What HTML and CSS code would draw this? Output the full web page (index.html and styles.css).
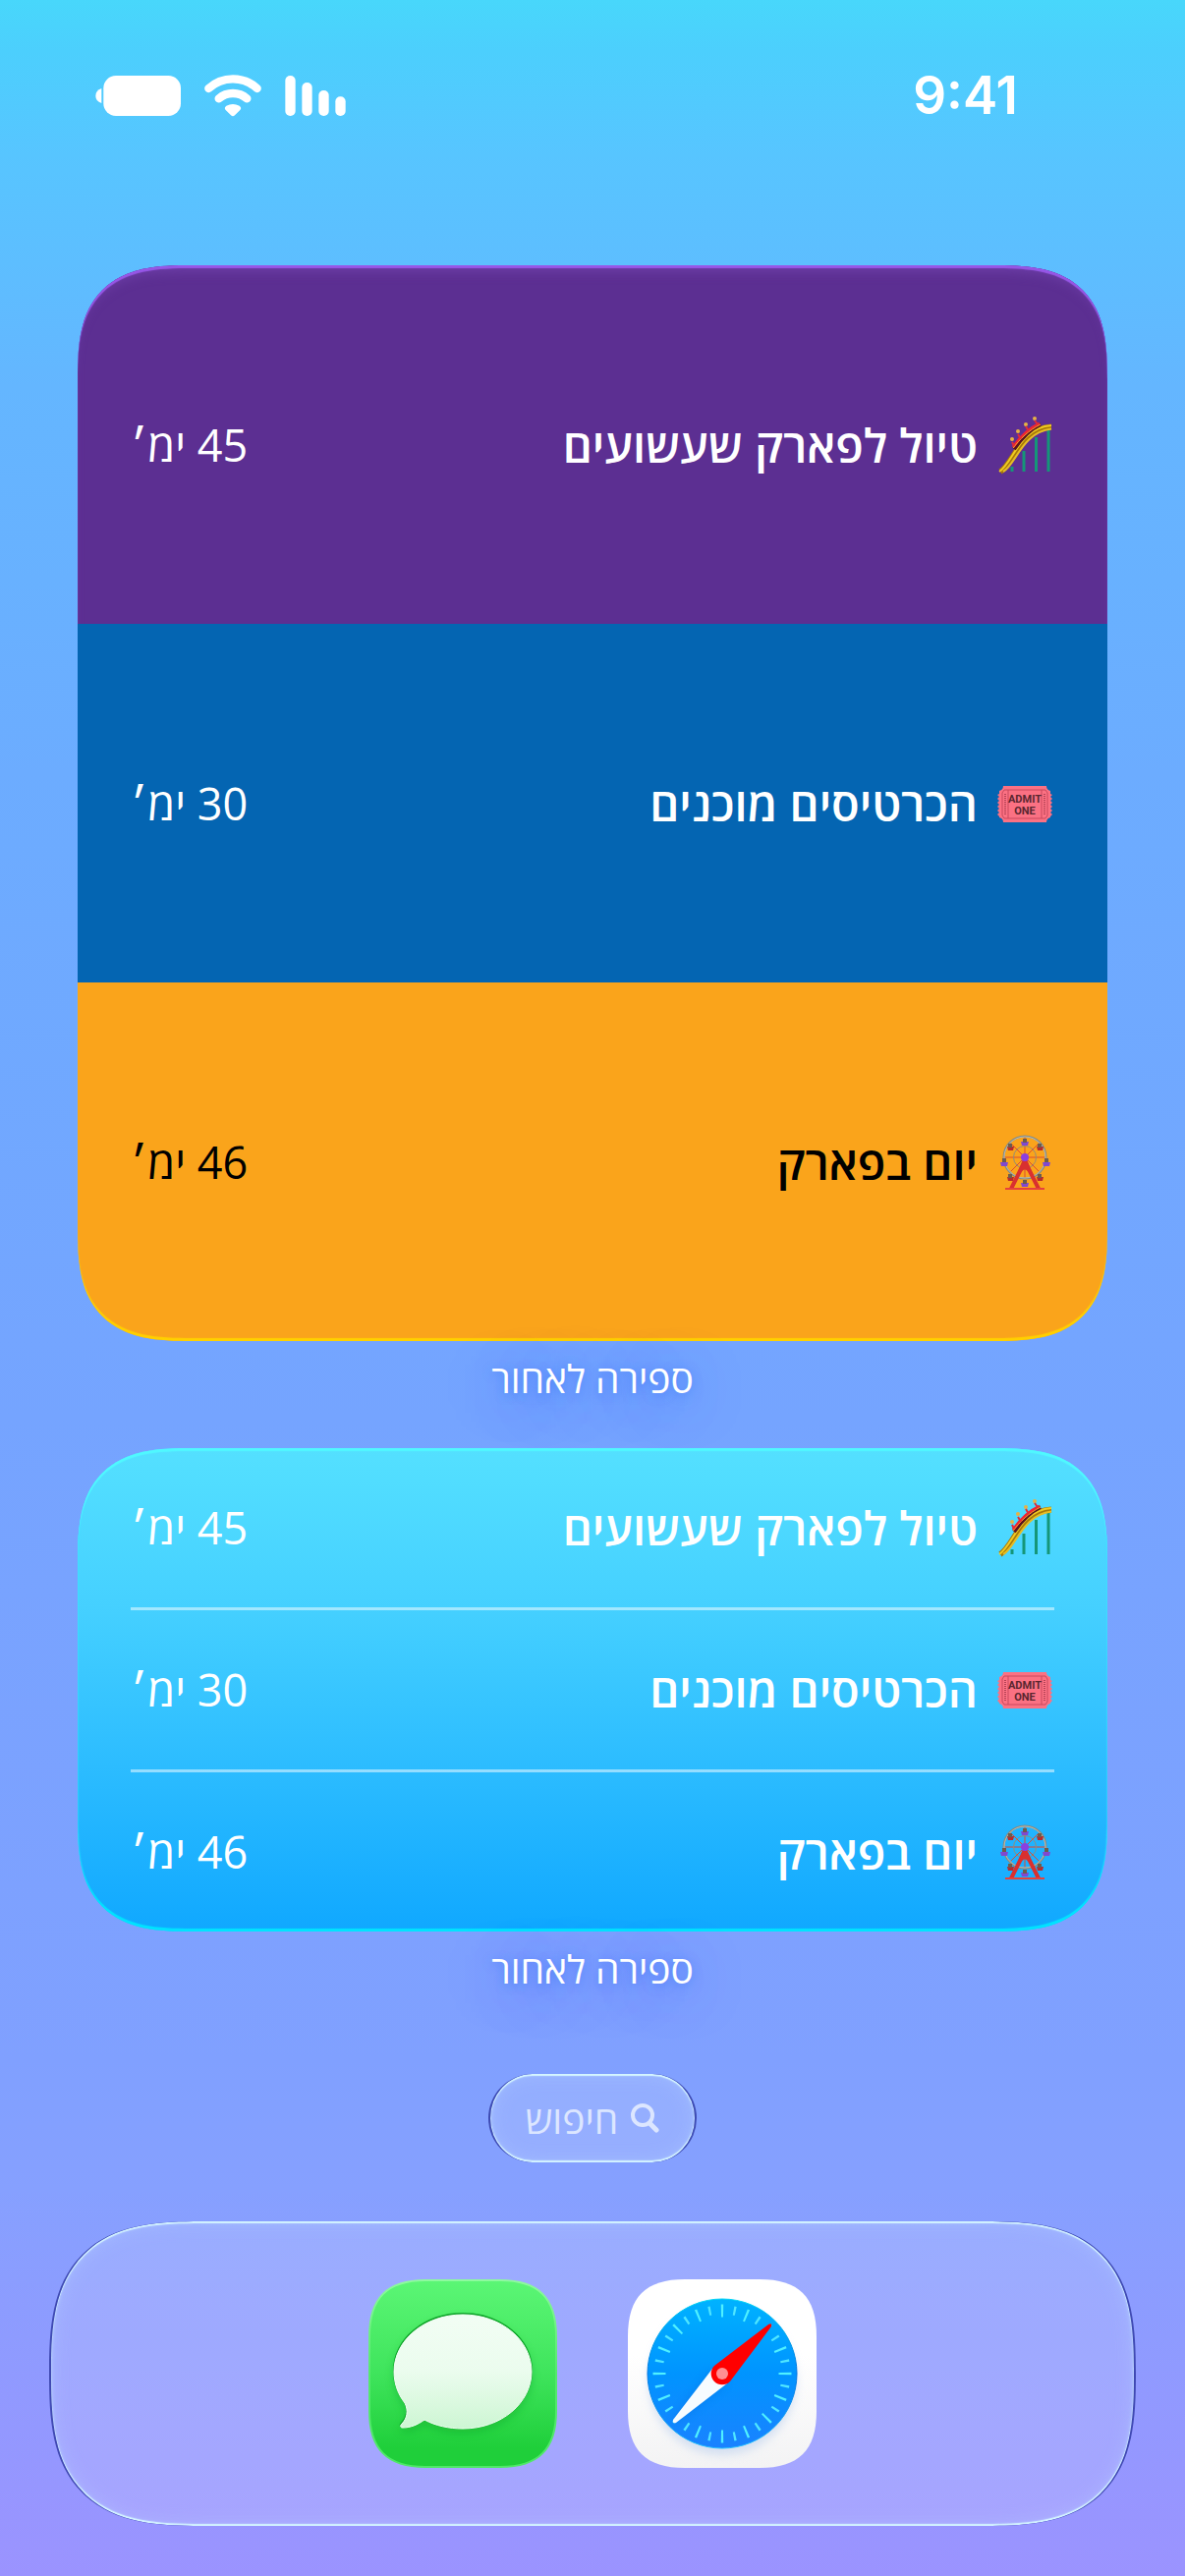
FILE: index.html
```html
<!DOCTYPE html>
<html lang="he" dir="rtl">
<head>
    <meta charset="UTF-8">
    <meta name="viewport" content="width=device-width, initial-scale=1.0">
    <title>ספירה לאחור</title>
    <link rel="stylesheet" href="styles.css">
</head>
<body>
    <!-- shared drawings -->
    <svg class="defs" width="0" height="0" aria-hidden="true">
        <defs>
            <symbol id="coaster" viewBox="0 0 60 60">
                <g stroke="#159678" stroke-width="3">
                    <path d="M17 52V57M29 36V57M41.500 22V57M54 15V57"/>
                </g>
                <path d="M5 57C19 49 25 13 57 11.500" fill="none" stroke="#a87908" stroke-width="6"/>
                <path d="M4 57C18 48 25 12 57 10" fill="none" stroke="#f0cb22" stroke-width="2"/>
                <path d="M8 57C21 50 27 17 57 13.500" fill="none" stroke="#e6bd25" stroke-width="2"/>
                <path d="M19 34C26 24 35 14 46 9" fill="none" stroke="#5a1420" stroke-width="4"/>
                <path d="M18 32C25 22 34 13 45 8" fill="none" stroke="#ef2433" stroke-width="3"/>
                <path d="M18 33C25 24 34 15 46 9" fill="none" stroke="#f5a327" stroke-width="1"/>
                <g fill="#e6b245">
                    <circle cx="17" cy="24" r="2"/><circle cx="23" cy="16" r="2"/><circle cx="31" cy="9" r="2"/><circle cx="40" cy="3" r="2"/>
                </g>
                <g stroke="#e02b38" stroke-width="2"><path d="M17 27l2 4M23 19l3 5M31 11l3 5M40 5l3 4"/></g>
            </symbol>
            <symbol id="ticket" viewBox="0 0 60 60">
                <path d="M8 12H52Q52 16 56 17V20L58 21 56 23 58 25 56 27 58 29 56 31 58 33 56 35 58 37 56 39 58 41 56 43V44Q52 45 52 49H8Q8 45 4 44V43L2 41 4 39 2 37 4 35 2 33 4 31 2 29 4 27 2 25 4 23 2 21 4 20V17Q8 16 8 12Z" fill="#fb7183"/>
                <path d="M9 16H51L53 19V42L51 45H9L7 42V19ZM13 16V45M47 16V45" fill="none" stroke="#c9495d" stroke-width="1"/>
                <path d="M10 20V42M50 20V42" stroke="#b54255" stroke-width="2" stroke-dasharray="1 1"/>
                <text x="30" y="29" class="ticket-text">ADMIT</text>
                <text x="30" y="41" class="ticket-text">ONE</text>
            </symbol>
            <symbol id="wheel" viewBox="0 0 60 60">
                <g stroke="#dc4a33" stroke-width="1">
                    <path d="M30 4V46M9 25H51M15 10L45 40M45 10L15 40"/>
                </g>
                <circle cx="30" cy="25" r="21.500" fill="none" stroke="#858a82" stroke-width="2"/>
                <circle cx="30" cy="25" r="21" fill="none" stroke="#bdbbad" stroke-width="1"/>
                <circle cx="30" cy="25" r="11.500" fill="none" stroke="#948c78" stroke-width="1"/>
                <g fill="#8048d0">
                    <path d="M26 9h8l-1 4h-6zM5 30h8l-1 4H6zM48 30h8l-1 4h-6zM26 51h8l-1 4h-6z"/>
                </g>
                <g fill="#b92b2b">
                    <path d="M12 14h7l-1 4h-5zM42 14h7l-1 4h-5zM12 45h7l-1 4h-5zM42 45h7l-1 4h-5z"/>
                </g>
                <path d="M30 6v4M9 26v4M52 26v4M30 48v4M15 11v4M45 11v4M15 42v4M45 42v4" stroke="#6e5c4c" stroke-width="4"/>
                <path d="M30 29L16 57M30 29L44 57" stroke="#d9302f" stroke-width="4"/>
                <path d="M28 27h4l6 15h-3q-5-9-10 0h-3z" fill="#d9302f"/>
                <path d="M10 57H50" stroke="#e6413c" stroke-width="2"/>
                <circle cx="30" cy="25" r="4" fill="#8b3fe0"/>
            </symbol>
        </defs>
    </svg>

    <header class="status-bar">
        <time class="clock">9:41</time>
        <div class="status-icons">
            <svg width="62" height="41" viewBox="0 0 186 123" fill="#fff" aria-hidden="true">
                <rect x="1" y="0" width="31" height="123" rx="15"/>
                <rect x="52" y="21" width="31" height="102" rx="15"/>
                <rect x="103" y="45" width="31" height="78" rx="15"/>
                <rect x="154" y="64" width="31" height="59" rx="15"/>
            </svg>
            <svg width="58" height="43" viewBox="0 0 172 129" aria-hidden="true">
                <path d="M12 42A109 109 0 0 1 160 42M43 73A66 66 0 0 1 129 73" fill="none" stroke="#fff" stroke-width="25" stroke-linecap="round"/>
                <path d="M66 95Q86 85 106 95Q114 101 108 108L92 124Q86 130 80 124L64 108Q58 101 66 95Z" fill="#fff"/>
            </svg>
            <svg width="87" height="41" viewBox="0 0 262 123" fill="#fff" aria-hidden="true">
                <rect x="25" y="0" width="237" height="123" rx="38"/>
                <path d="M19 39V84Q1 78 1 62Q1 45 19 39Z"/>
            </svg>
        </div>
    </header>

    <main>
        <section class="widget">
            <ul class="card card-large">
                <li class="event purple">
                    <svg class="emoji"><use href="#coaster"/></svg>
                    <span class="title">טיול לפארק שעשועים</span>
                    <span class="days">45 ימ׳</span>
                </li>
                <li class="event blue">
                    <svg class="emoji"><use href="#ticket"/></svg>
                    <span class="title">הכרטיסים מוכנים</span>
                    <span class="days">30 ימ׳</span>
                </li>
                <li class="event orange">
                    <svg class="emoji"><use href="#wheel"/></svg>
                    <span class="title">יום בפארק</span>
                    <span class="days">46 ימ׳</span>
                </li>
            </ul>
            <h2 class="widget-name">ספירה לאחור</h2>
        </section>

        <section class="widget">
            <ul class="card card-medium">
                <li class="event">
                    <svg class="emoji"><use href="#coaster"/></svg>
                    <span class="title">טיול לפארק שעשועים</span>
                    <span class="days">45 ימ׳</span>
                </li>
                <li class="event">
                    <svg class="emoji"><use href="#ticket"/></svg>
                    <span class="title">הכרטיסים מוכנים</span>
                    <span class="days">30 ימ׳</span>
                </li>
                <li class="event">
                    <svg class="emoji"><use href="#wheel"/></svg>
                    <span class="title">יום בפארק</span>
                    <span class="days">46 ימ׳</span>
                </li>
            </ul>
            <h2 class="widget-name">ספירה לאחור</h2>
        </section>
    </main>

    <button type="button" class="search glass">
        <svg width="30" height="30" viewBox="0 0 30 30" fill="none" stroke="currentColor" aria-hidden="true">
            <circle cx="13" cy="12" r="10" stroke-width="4"/>
            <path d="M20 20L27 27" stroke-width="5" stroke-linecap="round"/>
        </svg>
        <span>חיפוש</span>
    </button>

    <nav class="dock glass">
        <a class="app" href="#safari" aria-label="Safari">
            <svg viewBox="0 0 192 192" aria-hidden="true">
                <defs>
                    <linearGradient id="safari-bg" x1="0" y1="0" x2="0" y2="1">
                        <stop offset="0.4" stop-color="#fff"/><stop offset="1" stop-color="#f3f3f4"/>
                    </linearGradient>
                    <linearGradient id="safari-dial" x1="0" y1="0" x2="0" y2="1">
                        <stop offset="0" stop-color="#00b2ff"/><stop offset="0.5" stop-color="#0094ff"/><stop offset="1" stop-color="#1a82ff"/>
                    </linearGradient>
                    <linearGradient id="safari-rim" x1="0" y1="0" x2="0" y2="1">
                        <stop offset="0" stop-color="#00d5f5"/><stop offset="0.5" stop-color="#0072e0"/><stop offset="1" stop-color="#20bfff"/>
                    </linearGradient>
                    <filter id="soft" x="-20%" y="-20%" width="140%" height="140%"><feGaussianBlur stdDeviation="5"/></filter>
                </defs>
                <path d="M58 0H134C174 0 192 18 192 58V134C192 174 174 192 134 192H58C18 192 0 174 0 134V58C0 18 18 0 58 0Z" fill="url(#safari-bg)"/>
                <circle cx="96" cy="104" r="75" fill="#bdd0ee" opacity="0.6" filter="url(#soft)"/>
                <circle cx="96" cy="96" r="76" fill="url(#safari-dial)" stroke="url(#safari-rim)"/>
                <circle cx="96" cy="96" r="64" fill="none" stroke="#4ff0ff" stroke-width="13" pathLength="320" stroke-dasharray="1.800 18.200" stroke-dashoffset="0.900"/>
                <circle cx="96" cy="96" r="65" fill="none" stroke="#4fe6ff" stroke-width="9" pathLength="320" stroke-dasharray="1.800 18.200" stroke-dashoffset="-9.100"/>
                <path d="M85 93L47 143Q45 147 49 146L100 107Z" fill="#0058c8" opacity="0.3" filter="url(#soft)"/>
                <path d="M86 91L46 143Q45 147 49 146L101 106Z" fill="#f6fbff"/>
                <path d="M88 88L143 46Q147 44 146 48L104 104A11 11 0 1 1 88 88Z" fill="#f00"/>
                <circle cx="96" cy="96" r="6" fill="#ff8f93"/>
            </svg>
        </a>
        <a class="app" href="#messages" aria-label="Messages">
            <svg viewBox="0 0 192 192" aria-hidden="true">
                <defs>
                    <linearGradient id="msg-bg" x1="0" y1="0" x2="0" y2="1">
                        <stop offset="0" stop-color="#5bf675"/><stop offset="0.5" stop-color="#3fe45c"/><stop offset="0.9" stop-color="#1fcf3a"/>
                    </linearGradient>
                    <linearGradient id="msg-rim" x1="0" y1="0" x2="0" y2="1">
                        <stop offset="0" stop-color="#8dfa9d"/><stop offset="0.5" stop-color="#55e86c"/><stop offset="1" stop-color="#4fe868"/>
                    </linearGradient>
                    <linearGradient id="bubble" x1="0" y1="0" x2="0" y2="1">
                        <stop offset="0" stop-color="#f2fdf4"/><stop offset="0.5" stop-color="#ebfcee"/><stop offset="1" stop-color="#cdf6d3"/>
                    </linearGradient>
                    <path id="bubble-shape" d="M96 35C135 35 166 61 166 93C166 125 135 151 96 151C82 151 68 148 57 142C50 147 43 150 35 150C32 150 32 148 34 146C39 141 41 133 37 125C30 116 26 105 26 93C26 61 57 35 96 35Z"/>
                </defs>
                <path d="M58 1H134C173 1 191 19 191 58V134C191 173 173 191 134 191H58C19 191 1 173 1 134V58C1 19 19 1 58 1Z" fill="url(#msg-bg)" stroke="url(#msg-rim)" stroke-width="2"/>
                <use href="#bubble-shape" y="5" fill="#089a22" opacity="0.4" filter="url(#soft)"/>
                <use href="#bubble-shape" fill="#0fa52a" stroke="#0fa52a" stroke-width="2"/>
                <use href="#bubble-shape" y="1" fill="url(#bubble)" stroke="#f4fff5"/>
            </svg>
        </a>
    </nav>
</body>
</html>
```
FILE: styles.css
```css
* {
    box-sizing: border-box;
}

body {
    display: flex;
    flex-direction: column;
    align-items: stretch;
    min-height: 100vh;
    margin: 0;
    padding-bottom: 51px;
    font-family: "Open Sans", "Liberation Sans", sans-serif;
    color: #fff;
    background: linear-gradient(#48d7fb 0%, #4ccffd 2%, #57c5ff 6%, #64b6ff 15%, #6cacff 30%, #75a4ff 55%, #80a0ff 80%, #86a0ff 85%, #9b93ff 100%);
}

.defs {
    position: absolute;
}

/* Status bar */
.status-bar {
    display: flex;
    justify-content: space-between;
    align-items: center;
    height: 194px;
    padding: 0 170px 0 97px;
}

.clock {
    font-family: Inter, sans-serif;
    font-size: 53px;
    font-weight: 600;
}

.status-icons {
    display: flex;
    align-items: center;
    gap: 24px;
}

/* Widgets */
main {
    padding: 76px 79px 0;
}

.card {
    margin: 0;
    padding: 0;
    list-style: none;
    border-radius: 88px;
}

.event {
    display: flex;
    align-items: center;
    gap: 18px;
}

.emoji {
    width: 60px;
    height: 60px;
    flex: none;
}

.ticket-text {
    font-family: Roboto, sans-serif;
    font-size: 11px;
    font-weight: 700;
    text-anchor: middle;
    direction: ltr;
    fill: #5a2630;
}

.title {
    flex: 1;
    font-size: 47px;
    font-weight: 600;
    line-height: 56px;
}

.days {
    font-size: 45px;
    font-weight: 400;
    line-height: 56px;
}

.card-large .event {
    height: 365px;
    padding: 0 54px;
}

.purple {
    background: #5c2f92;
    border-radius: 88px 88px 0 0;
    box-shadow: inset 0 3px 1px #9757e8, inset 0 12px 12px -6px #6d3fa8;
}

.blue {
    background: #0465b2;
}

.orange {
    color: #000;
    background: #faa41b;
    border-radius: 0 0 88px 88px;
    box-shadow: inset 0 -3px 1px #ffd000;
}

.card-medium {
    padding: 0 54px;
    background: linear-gradient(#54e0ff, #45d0ff 33%, #2cbcff 66%, #10a8ff);
    box-shadow: inset 0 3px 1px #50f8ff, inset 0 -3px 1px #00e4ff, inset 0 0 2px #40e8ff;
}

.card-medium .event {
    height: 162px;
}

.card-medium .event + .event {
    height: 165px;
    border-top: 3px solid rgba(255, 255, 255, 0.5);
}

.widget-name {
    position: relative;
    margin: 0 0 34px;
    font-size: 39px;
    font-weight: 500;
    line-height: 75px;
    text-align: center;
    text-shadow: 0 2px 10px rgba(50, 110, 240, 0.5), 0 8px 50px rgba(30, 100, 255, 0.5);
}

/* Search and dock */
.glass {
    background: rgba(255, 255, 255, 0.15);
    border: 0 solid rgba(40, 50, 160, 0.8);
    border-width: 0 2px;
    box-shadow: inset 0 2px 1px #d4f4ff, inset 0 -2px 1px #d4f4ff, inset 0 0 4px #b5d0ff, inset 0 0 20px rgba(190, 220, 255, 0.3);
}

.search {
    display: flex;
    align-items: center;
    align-self: center;
    gap: 12px;
    height: 90px;
    margin: 36px 0 60px;
    padding: 0 36px;
    font-family: inherit;
    font-size: 39px;
    font-weight: 500;
    color: #dce6ff;
    border-radius: 45px;
}

.dock {
    display: flex;
    justify-content: center;
    gap: 72px;
    margin: 0 50px;
    padding: 59px;
    border-radius: 126px;
}

.app {
    width: 192px;
    height: 192px;
}

.app svg {
    display: block;
}

/* Smoother corners where the browser has them */
@supports (corner-shape: superellipse(1.5)) {
    .card,
    .purple,
    .orange,
    .dock {
        corner-shape: superellipse(1.5);
    }

    .card {
        border-radius: 116px;
    }

    .purple {
        border-radius: 116px 116px 0 0;
    }

    .orange {
        border-radius: 0 0 116px 116px;
    }

    .dock {
        border-radius: 155px;
    }
}
```
